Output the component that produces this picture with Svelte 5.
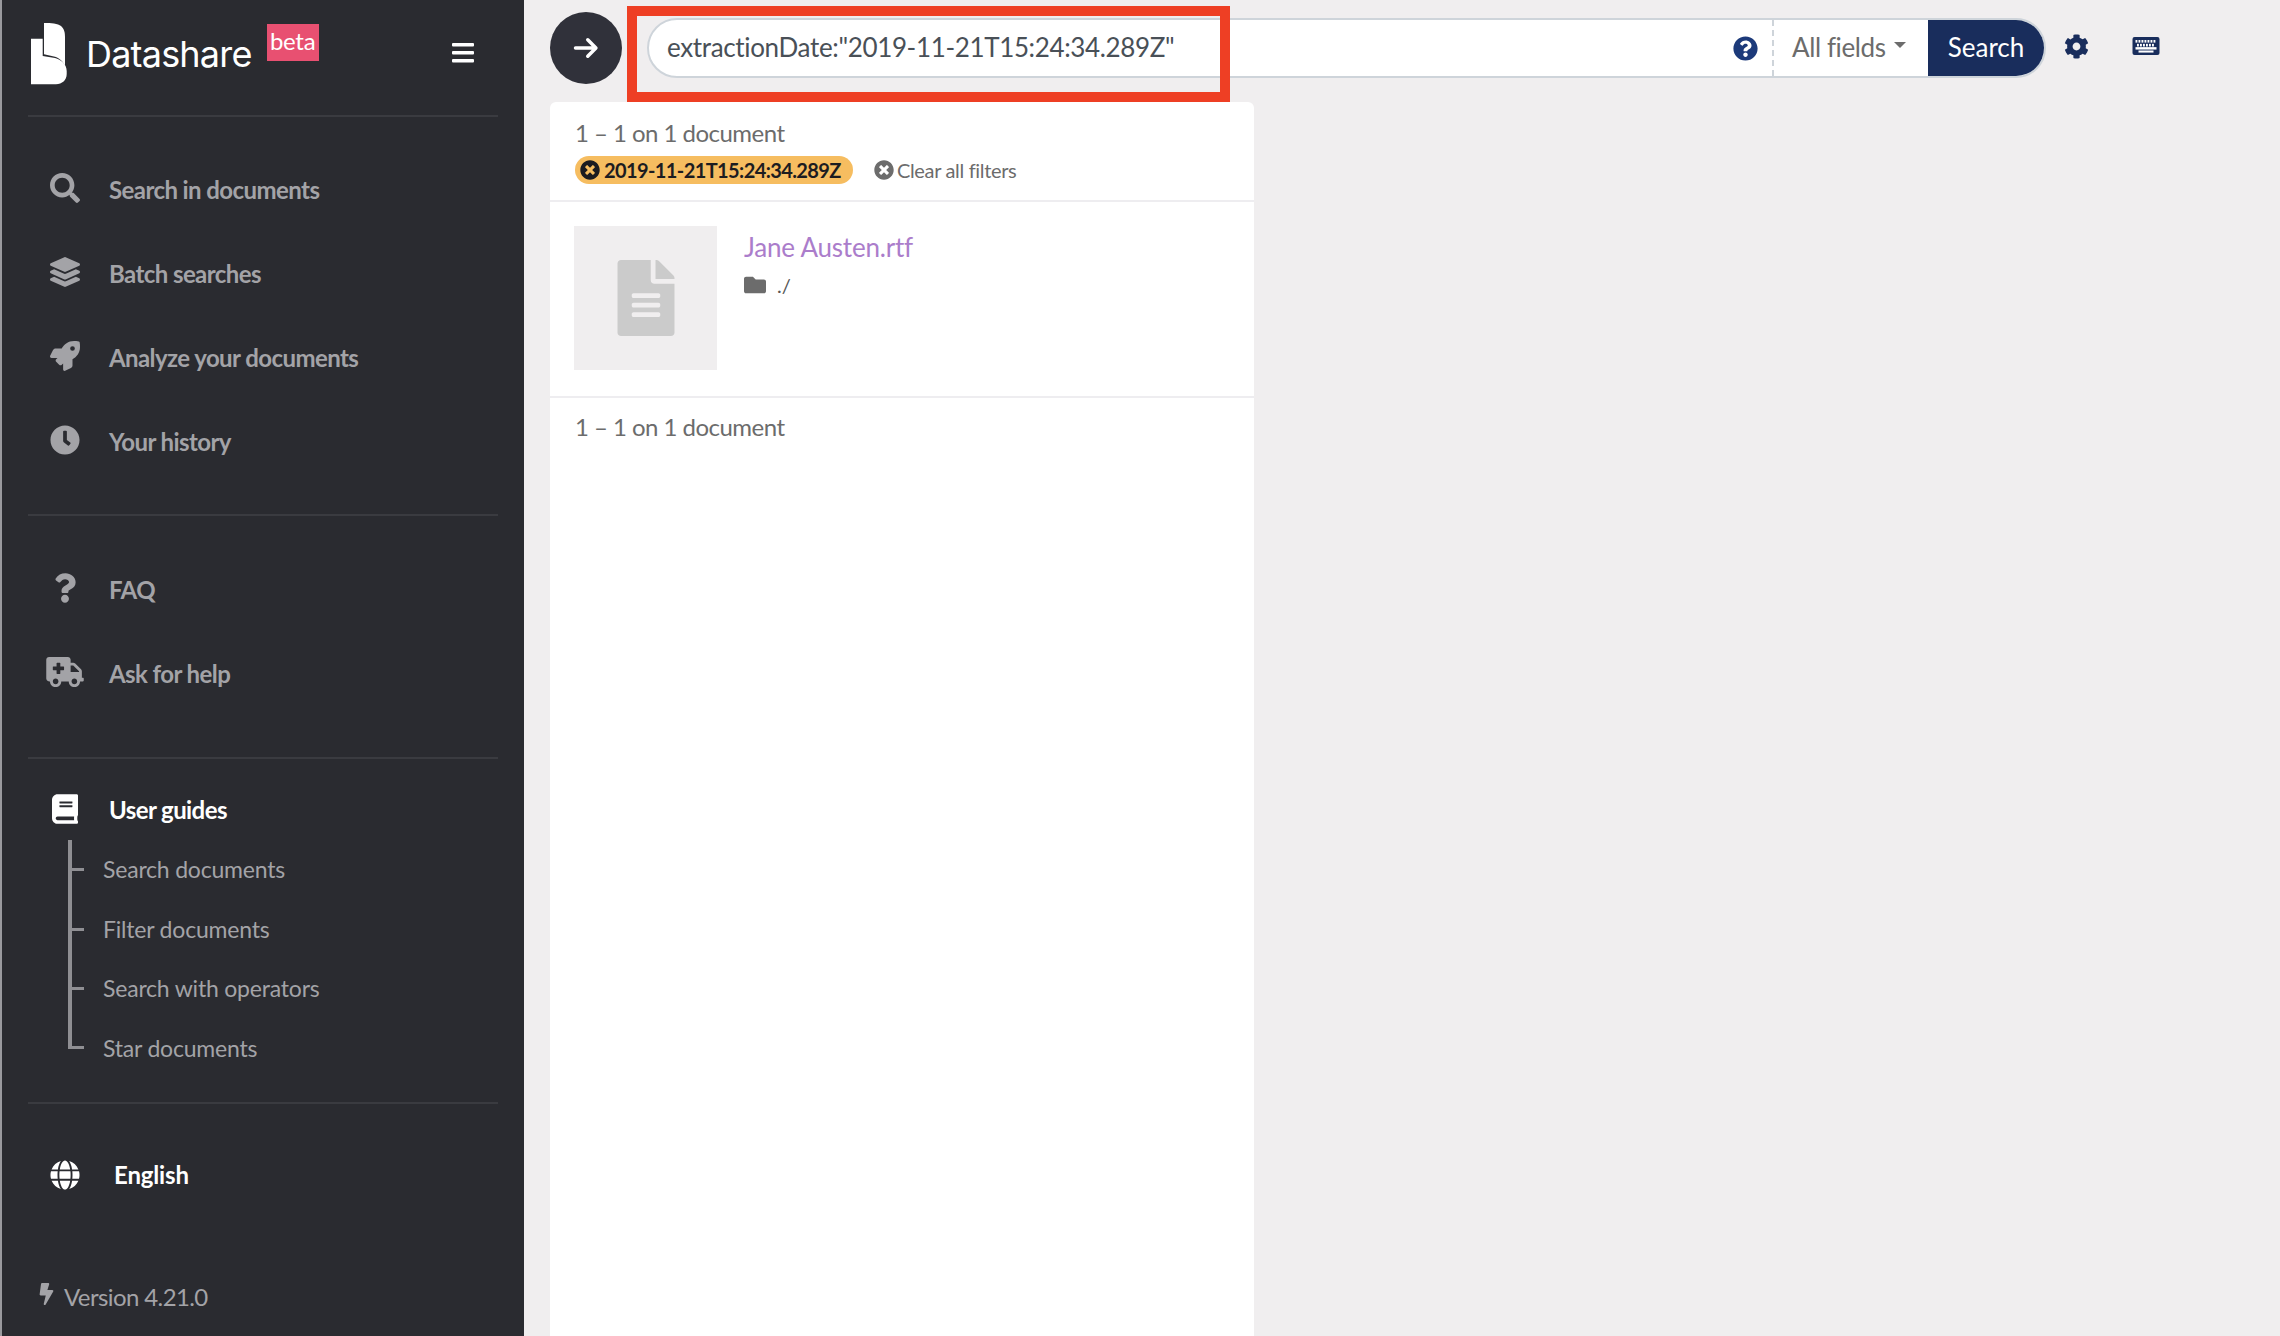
<script>
  const mainNav = [
    { label: 'Search in documents', box: '0 0 512 512', w: 30, path: 'M505 442.7L405.3 343c-4.5-4.5-10.6-7-17-7H372c27.6-35.3 44-79.7 44-128C416 93.1 322.9 0 208 0S0 93.1 0 208s93.1 208 208 208c48.3 0 92.7-16.4 128-44v16.3c0 6.4 2.5 12.5 7 17l99.7 99.7c9.4 9.4 24.6 9.4 33.9 0l28.3-28.3c9.4-9.4 9.4-24.6.1-34zM208 336c-70.7 0-128-57.2-128-128 0-70.7 57.2-128 128-128 70.7 0 128 57.2 128 128 0 70.7-57.2 128-128 128z' },
    { label: 'Batch searches', box: '0 0 512 512', w: 30, path: 'M12.41 148.02l232.94 105.67c6.8 3.09 14.49 3.09 21.29 0l232.94-105.67c16.55-7.51 16.55-32.52 0-40.03L266.65 2.31a25.607 25.607 0 0 0-21.29 0L12.41 107.98c-16.55 7.51-16.55 32.53 0 40.04zm487.18 88.28l-58.09-26.33-161.64 73.27c-7.56 3.43-15.59 5.17-23.86 5.17s-16.29-1.74-23.86-5.17L70.51 209.97l-58.1 26.33c-16.55 7.5-16.55 32.5 0 40l232.94 105.59c6.8 3.08 14.49 3.08 21.29 0L499.59 276.3c16.55-7.5 16.55-32.5 0-40zm0 127.8l-57.87-26.23-161.86 73.37c-7.56 3.43-15.59 5.17-23.86 5.17s-16.29-1.74-23.86-5.17L70.29 337.87 12.41 364.1c-16.55 7.5-16.55 32.5 0 40l232.94 105.59c6.8 3.08 14.49 3.08 21.29 0L499.59 404.1c16.55-7.5 16.55-32.5 0-40z' },
    { label: 'Analyze your documents', box: '0 0 512 512', w: 30, path: 'M505.12019,19.09375c-1.18945-5.53125-6.65819-11-12.207-12.1875C460.716,0,435.507,0,410.40747,0,307.17523,0,245.26909,55.20312,199.05238,128H94.83772c-16.34763.01562-35.55658,11.875-42.88664,26.48438L2.51562,253.29688A28.4,28.4,0,0,0,0,264a24.00867,24.00867,0,0,0,24.00582,24H127.81618l-22.47457,22.46875c-11.36521,11.36133-12.99607,32.25781,0,45.25L156.24582,406.625c11.15623,11.1875,32.15619,13.15625,45.27726,0l22.47457-22.46875V488a24.00867,24.00867,0,0,0,24.00581,24,28.55934,28.55934,0,0,0,10.707-2.51562l98.72834-49.39063c14.62888-7.29687,26.50776-26.5,26.50776-42.85937V312.79688c72.59753-46.3125,128.03493-108.40626,128.03493-211.09376C512.07526,76.5,512.07526,51.29688,505.12019,19.09375ZM384.04033,168A40,40,0,1,1,424.05,128,40.02322,40.02322,0,0,1,384.04033,168Z' },
    { label: 'Your history', box: '0 0 512 512', w: 30, path: 'M256,8C119,8,8,119,8,256S119,504,256,504,504,393,504,256,393,8,256,8Zm92.49,313h0l-20,25a16,16,0,0,1-22.49,2.5h0l-67-49.72a40,40,0,0,1-15-31.23V112a16,16,0,0,1,16-16h32a16,16,0,0,1,16,16V256l58,42.5A16,16,0,0,1,348.49,321Z' }
  ]
  const helpNav = [
    { label: 'FAQ', box: '0 0 384 512', w: 22, path: 'M202.021 0C122.202 0 70.503 32.703 29.914 91.026c-7.363 10.58-5.093 25.086 5.178 32.874l43.138 32.709c10.373 7.865 25.132 6.026 33.253-4.148 25.049-31.381 43.63-49.449 82.757-49.449 30.764 0 68.816 19.799 68.816 49.631 0 22.552-18.617 34.134-48.993 51.164-35.423 19.86-82.299 44.576-82.299 106.405V320c0 13.255 10.745 24 24 24h72.471c13.255 0 24-10.745 24-24v-5.773c0-42.86 125.268-44.645 125.268-160.627C377.504 66.256 286.902 0 202.021 0zM192 373.459c-38.196 0-69.271 31.075-69.271 69.271 0 38.195 31.075 69.27 69.271 69.27s69.271-31.075 69.271-69.271-31.075-69.27-69.271-69.27z' },
    { label: 'Ask for help', box: '0 0 640 512', w: 38, path: 'M624 352h-16V243.9c0-12.7-5.1-24.9-14.1-33.9L494 110.1c-9-9-21.2-14.1-33.9-14.1H416V48c0-26.5-21.5-48-48-48H48C21.5 0 0 21.5 0 48v320c0 26.5 21.5 48 48 48h16c0 53 43 96 96 96s96-43 96-96h128c0 53 43 96 96 96s96-43 96-96h48c8.8 0 16-7.2 16-16v-32c0-8.8-7.2-16-16-16zM160 464c-26.5 0-48-21.5-48-48s21.5-48 48-48 48 21.5 48 48-21.5 48-48 48zm144-248c0 4.4-3.6 8-8 8h-56v56c0 4.4-3.6 8-8 8h-48c-4.4 0-8-3.6-8-8v-56h-56c-4.4 0-8-3.6-8-8v-48c0-4.4 3.6-8 8-8h56v-56c0-4.4 3.6-8 8-8h48c4.4 0 8 3.6 8 8v56h56c4.4 0 8 3.6 8 8v48zm176 248c-26.5 0-48-21.5-48-48s21.5-48 48-48 48 21.5 48 48-21.5 48-48 48zm80-208H416V144h44.1l99.9 99.9V256z' }
  ]
  const guides = ['Search documents', 'Filter documents', 'Search with operators', 'Star documents']
  const timesCircle = 'M256 8C119 8 8 119 8 256s111 248 248 248 248-111 248-248S393 8 256 8zm121.6 313.1c4.7 4.7 4.7 12.3 0 17L338 377.6c-4.7 4.7-12.3 4.7-17 0L256 312l-65.1 65.6c-4.7 4.7-12.3 4.7-17 0L134.4 338c-4.7-4.7-4.7-12.3 0-17l65.6-65-65.6-65.1c-4.7-4.7-4.7-12.3 0-17l39.6-39.6c4.7-4.7 12.3-4.7 17 0l65 65.7 65.1-65.6c4.7-4.7 12.3-4.7 17 0l39.6 39.6c4.7 4.7 4.7 12.3 0 17L312 256l65.6 65.1z'
  const keyRows = [
    { y: 64, xs: [64, 128, 192, 256, 320, 384, 448] },
    { y: 146, xs: [96, 160, 224, 288, 352, 416] }
  ]
</script>

<div class="app">
  <aside class="sidebar">
    <header class="brand">
      <svg class="logo" viewBox="0 0 36 62" aria-hidden="true">
        <path fill="#fff" d="M13 0C20 0 27 .5 30 3C33.5 6 34 10 34 14V43C32 38 28 35 24 33.7L13 31.3Z" />
        <path fill="#fff" d="M0 15.7H11.7V33L24 35C30 36.5 35.7 41 35.7 48V51C35.7 57 31 61.3 25 61.3H0Z" />
      </svg>
      <span class="wordmark">Datashare</span>
      <span class="beta">beta</span>
      <svg class="bars" viewBox="0 0 22 20" aria-hidden="true">
        <rect width="22" height="3.5" y="0" rx="1" />
        <rect width="22" height="3.5" y="8" rx="1" />
        <rect width="22" height="3.5" y="16" rx="1" />
      </svg>
    </header>

    <nav class="group first">
      {#each mainNav as item}
        <a class="item">
          <span class="ico"><svg viewBox={item.box} style="width:{item.w}px"><path d={item.path} /></svg></span>
          <span class="label">{item.label}</span>
        </a>
      {/each}
    </nav>

    <nav class="group second">
      {#each helpNav as item}
        <a class="item">
          <span class="ico"><svg viewBox={item.box} style="width:{item.w}px"><path d={item.path} /></svg></span>
          <span class="label">{item.label}</span>
        </a>
      {/each}
    </nav>

    <section class="group guides">
      <div class="item active">
        <span class="ico">
          <svg viewBox="0 0 448 512" style="width:26px"><path d="M448 360V24c0-13.3-10.7-24-24-24H96C43 0 0 43 0 96v320c0 53 43 96 96 96h328c13.3 0 24-10.7 24-24v-16c0-7.5-3.5-14.3-8.9-18.7-4.2-15.4-4.2-59.3 0-74.7 5.4-4.3 8.9-11.1 8.9-18.6zM128 134c0-3.3 2.7-6 6-6h212c3.3 0 6 2.7 6 6v20c0 3.3-2.7 6-6 6H134c-3.3 0-6-2.7-6-6v-20zm0 64c0-3.3 2.7-6 6-6h212c3.3 0 6 2.7 6 6v20c0 3.3-2.7 6-6 6H134c-3.3 0-6-2.7-6-6v-20zm253.4 250H96c-17.7 0-32-14.3-32-32 0-17.6 14.4-32 32-32h285.4c-1.9 17.1-1.9 46.9 0 64z" /></svg>
        </span>
        <span class="label">User guides</span>
      </div>
      <ul class="tree">
        {#each guides as guide}
          <li>{guide}</li>
        {/each}
      </ul>
    </section>

    <div class="lang">
      <span class="ico">
        <svg viewBox="0 0 496 512" style="width:30px"><path d="M336.5 160C322 70.7 287.8 8 248 8s-74 62.7-88.5 152h177zM152 256c0 22.2 1.2 43.5 3.3 64h185.3c2.1-20.5 3.3-41.8 3.3-64s-1.2-43.5-3.3-64H155.3c-2.1 20.5-3.3 41.8-3.3 64zm324.7-96c-28.6-67.9-86.5-120.4-158-141.6 24.4 33.8 41.2 84.7 50 141.6h108zM177.2 18.4C105.8 39.6 47.8 92.1 19.3 160h108c8.7-56.9 25.5-107.8 49.9-141.6zM487.4 192H372.7c2.1 21 3.3 42.5 3.3 64s-1.2 43-3.3 64h114.6c5.5-20.5 8.6-41.8 8.6-64s-3.1-43.5-8.5-64zM120 256c0-21.5 1.2-43 3.3-64H8.6C3.2 212.5 0 233.8 0 256s3.2 43.5 8.6 64h114.6c-2-21-3.2-42.5-3.2-64zm39.5 96c14.5 89.3 48.7 152 88.5 152s74-62.7 88.5-152h-177zm159.3 141.6c71.4-21.2 129.4-73.7 158-141.6h-108c-8.8 56.9-25.6 107.8-50 141.6zM19.3 352c28.6 67.9 86.5 120.4 158 141.6-24.4-33.8-41.2-84.7-50-141.6h-108z" /></svg>
      </span>
      <span>English</span>
    </div>

    <footer class="version">
      <svg viewBox="0 0 320 512" class="bolt"><path d="M296 160H180.6l42.6-129.8C227.2 15 215.7 0 200 0H56C44 0 33.8 8.9 32.2 20.8l-32 240C-1.7 275.2 9.5 288 24 288h118.7L96.6 482.5c-3.6 15.2 8 29.5 23.3 29.5 8.4 0 16.4-4.4 20.8-12l176-304c9.3-15.9-2.2-36-20.7-36z" /></svg>
      <span>Version 4.21.0</span>
    </footer>
  </aside>

  <main class="main">
    <div class="topbar">
      <button class="back" aria-label="Back">
        <svg viewBox="0 0 24 24" width="28" height="28"><path d="M3 12h17M13.5 5l7 7-7 7" /></svg>
      </button>
      <div class="searchbox">
        <span class="query">extractionDate:"2019-11-21T15:24:34.289Z"</span>
        <svg class="help" viewBox="0 0 512 512"><path d="M504 256c0 136.997-111.043 248-248 248S8 392.997 8 256C8 119.083 119.043 8 256 8s248 111.083 248 248zM262.655 90c-54.497 0-89.255 22.957-116.549 63.758-3.536 5.286-2.353 12.415 2.715 16.258l34.699 26.31c5.205 3.947 12.621 3.008 16.665-2.122 17.864-22.658 30.113-35.797 57.303-35.797 20.429 0 45.698 13.148 45.698 32.958 0 14.976-12.363 22.667-32.534 33.976C247.128 238.528 216 254.941 216 296v4c0 6.627 5.373 12 12 12h56c6.627 0 12-5.373 12-12v-1.333c0-28.462 83.186-29.647 83.186-106.667 0-58.002-60.165-102-116.531-102zM256 338c-25.365 0-46 20.635-46 46 0 25.364 20.635 46 46 46s46-20.636 46-46c0-25.365-20.635-46-46-46z" /></svg>
        <span class="fields">All fields<i class="caret"></i></span>
        <span class="submit">Search</span>
      </div>
      <svg class="gear" viewBox="0 0 512 512"><path d="M487.4 315.7l-42.6-24.6c4.3-23.2 4.3-47 0-70.2l42.6-24.6c4.9-2.8 7.1-8.6 5.5-14-11.1-35.6-30-67.8-54.7-94.6-3.8-4.1-10-5.1-14.8-2.3L380.8 110c-17.9-15.4-38.5-27.3-60.8-35.1V25.8c0-5.6-3.9-10.5-9.4-11.7-36.7-8.2-74.3-7.8-109.2 0-5.5 1.2-9.4 6.1-9.4 11.7V75c-22.2 7.9-42.8 19.8-60.8 35.1L88.7 85.5c-4.9-2.8-11-1.9-14.8 2.3-24.7 26.7-43.6 58.9-54.7 94.6-1.7 5.4.6 11.2 5.5 14L67.3 221c-4.3 23.2-4.3 47 0 70.2l-42.6 24.6c-4.9 2.8-7.1 8.6-5.5 14 11.1 35.6 30 67.8 54.7 94.6 3.8 4.1 10 5.1 14.8 2.3l42.6-24.6c17.9 15.4 38.5 27.3 60.8 35.1v49.2c0 5.6 3.9 10.5 9.4 11.7 36.7 8.2 74.3 7.8 109.2 0 5.5-1.2 9.4-6.1 9.4-11.7v-49.2c22.2-7.9 42.8-19.8 60.8-35.1l42.6 24.6c4.9 2.8 11 1.9 14.8-2.3 24.7-26.7 43.6-58.9 54.7-94.6 1.5-5.5-.7-11.3-5.6-14.1zM256 336c-44.1 0-80-35.9-80-80s35.9-80 80-80 80 35.9 80 80-35.9 80-80 80z" /></svg>
      <svg class="keys" viewBox="0 0 576 384">
        <rect width="576" height="384" rx="44" fill="#192d5c" />
        {#each keyRows as row}
          {#each row.xs as x}
            <rect {x} y={row.y} width="40" height="56" fill="#fff" />
          {/each}
        {/each}
        <rect x="64" y="216" width="448" height="52" fill="#fff" />
        <rect x="128" y="288" width="320" height="44" fill="#fff" />
      </svg>
    </div>

    <section class="panel">
      <div class="summary">
        <p class="count">1 – 1 on 1 document</p>
        <div class="filters">
          <span class="pill">
            <svg viewBox="0 0 512 512"><path d={timesCircle} /></svg>
            2019-11-21T15:24:34.289Z
          </span>
          <span class="clear">
            <svg viewBox="0 0 512 512"><path d={timesCircle} /></svg>
            Clear all filters
          </span>
        </div>
      </div>
      <article class="doc">
        <div class="thumb">
          <svg viewBox="0 0 384 512"><path d="M224 136V0H24C10.7 0 0 10.7 0 24v464c0 13.3 10.7 24 24 24h336c13.3 0 24-10.7 24-24V160H248c-13.2 0-24-10.8-24-24zm64 236c0 6.6-5.4 12-12 12H108c-6.6 0-12-5.4-12-12v-8c0-6.6 5.4-12 12-12h168c6.6 0 12 5.4 12 12v8zm0-64c0 6.6-5.4 12-12 12H108c-6.6 0-12-5.4-12-12v-8c0-6.6 5.4-12 12-12h168c6.6 0 12 5.4 12 12v8zm0-72v8c0 6.6-5.4 12-12 12H108c-6.6 0-12-5.4-12-12v-8c0-6.6 5.4-12 12-12h168c6.6 0 12 5.4 12 12zm96-114.1v6.1H256V0h6.1c6.4 0 12.5 2.5 17 7l97.9 98c4.5 4.5 7 10.6 7 16.9z" /></svg>
        </div>
        <div class="meta">
          <a class="title">Jane Austen.rtf</a>
          <div class="path">
            <svg viewBox="0 0 512 512"><path d="M464 128H272l-64-64H48C21.49 64 0 85.49 0 112v288c0 26.51 21.49 48 48 48h416c26.51 0 48-21.49 48-48V176c0-26.51-21.49-48-48-48z" /></svg>
            <span>./</span>
          </div>
        </div>
      </article>
      <p class="count foot">1 – 1 on 1 document</p>
    </section>

    <div class="annotation"></div>
  </main>
</div>

<style>
  :global(body) {
    margin: 0;
    background: #f0eeef;
    font-family: Lato, "Open Sans", sans-serif;
    overflow: hidden;
  }

  .app {
    display: flex;
    height: 1336px;
    overflow: hidden;
  }

  .sidebar {
    width: 522px;
    flex: none;
    display: flex;
    flex-direction: column;
    border-left: 2px solid #9a9a9e;
    background: #2a2b30;
    color: #a3a3a7;
    font-size: 24px;
    font-weight: 700;
  }

  .brand {
    height: 115px;
    margin: 0 26px;
    display: flex;
    align-items: flex-start;
    border-bottom: 2px solid #3a3b40;
  }

  .logo {
    width: 36px;
    height: 62px;
    margin: 23px 0 0 3px;
    flex: none;
  }

  .wordmark {
    margin: 32px 0 0 19px;
    font-family: Inter, sans-serif;
    font-weight: 400;
    font-size: 36px;
    line-height: 44px;
    letter-spacing: -0.8px;
    color: #fff;
  }

  .beta {
    margin: 24px 0 0 15px;
    width: 52px;
    height: 37px;
    background: #e85071;
    color: #fff;
    font-weight: 400;
    font-size: 24px;
    line-height: 33px;
    text-align: center;
    letter-spacing: -0.3px;
  }

  .bars {
    margin: 43px 24px 0 auto;
    width: 22px;
    height: 20px;
    fill: #fff;
  }

  .group {
    margin: 0 26px;
    border-bottom: 2px solid #3a3b40;
  }

  .first {
    padding: 31px 0 30px;
  }

  .second {
    padding: 32px 0 41px;
  }

  .guides {
    padding: 31px 0 24px;
  }

  .item {
    height: 84px;
    display: flex;
    align-items: center;
    gap: 9px;
  }

  .label {
    margin-bottom: 2px;
    letter-spacing: -0.58px;
  }

  .ico {
    width: 70px;
    margin-left: 2px;
    flex: none;
    display: flex;
    justify-content: center;
    margin-top: -5px;
  }

  .ico svg {
    height: 30px;
    fill: currentColor;
    display: block;
  }

  .active {
    height: 40px;
    color: #fff;
    margin-bottom: 10px;
  }

  .active .ico {
    margin-top: -2px;
  }

  .tree {
    list-style: none;
    margin: 0 0 0 40px;
    padding: 0;
    font-weight: 400;
    font-size: 23px;
    letter-spacing: -0.2px;
  }

  .tree li {
    position: relative;
    height: 59.5px;
    padding-left: 31px;
    line-height: 59px;
    border-left: 4px solid #8f8f93;
    box-sizing: border-box;
  }

  .tree li::before {
    content: '';
    position: absolute;
    left: 0;
    top: 28px;
    width: 12px;
    height: 3px;
    background: #8f8f93;
  }

  .tree li:last-child {
    height: 30px;
    margin-bottom: 29px;
  }

  .tree li:last-child::before {
    top: 27px;
  }

  .lang {
    margin: 51px 26px 0;
    display: flex;
    align-items: center;
    height: 40px;
    color: #fff;
    letter-spacing: -0.15px;
  }

  .lang .ico {
    margin-right: 14px;
    margin-top: 0;
  }

  .lang > span:last-child {
    margin-bottom: 0;
  }

  .version {
    margin: 85px 0 0 37px;
    display: flex;
    align-items: center;
    gap: 10px;
    font-size: 24px;
    font-weight: 400;
    letter-spacing: -0.6px;
    color: #a3a3a7;
    height: 34px;
  }

  .bolt {
    width: 15px;
    height: 22px;
    fill: currentColor;
    margin-top: -6px;
  }

  .main {
    position: relative;
    flex: 1;
    padding-left: 26px;
  }

  .topbar {
    height: 102px;
    display: flex;
    align-items: flex-start;
    padding-top: 12px;
    box-sizing: border-box;
  }

  .back {
    width: 72px;
    height: 72px;
    flex: none;
    padding: 0;
    border: 0;
    border-radius: 50%;
    background: #30313a;
    display: flex;
    align-items: center;
    justify-content: center;
  }

  .back path {
    fill: none;
    stroke: #fff;
    stroke-width: 3;
    stroke-linecap: round;
    stroke-linejoin: round;
  }

  .searchbox {
    width: 1399px;
    height: 60px;
    margin: 6px 0 0 25px;
    flex: none;
    display: flex;
    align-items: center;
    box-sizing: border-box;
    background: #fff;
    border: 2px solid #ced4da;
    border-radius: 30px;
    overflow: hidden;
    color: #6c6c6c;
    font-size: 26px;
  }

  .query {
    flex: 1;
    padding-left: 18px;
    padding-bottom: 2px;
    color: #495057;
    white-space: nowrap;
    letter-spacing: -0.35px;
  }

  .help {
    width: 25px;
    height: 25px;
    fill: #1c3a7a;
    margin-right: 14px;
  }

  .fields {
    width: 156px;
    height: 100%;
    box-sizing: border-box;
    padding: 0 0 2px 18px;
    display: flex;
    align-items: center;
    gap: 8px;
    border-left: 2px dashed #ced4da;
    letter-spacing: -0.4px;
  }

  .caret {
    width: 0;
    height: 0;
    border: 6px solid transparent;
    border-top-color: #6c6c6c;
    border-bottom: 0;
    margin-top: -4px;
  }

  .submit {
    width: 118px;
    height: 60px;
    margin: 0 -2px 0 0;
    padding: 0 2px 2px 0;
    box-sizing: border-box;
    flex: none;
    display: flex;
    align-items: center;
    justify-content: center;
    background: #192d5c;
    color: #fff;
  }

  .gear {
    width: 25px;
    height: 25px;
    margin: 22px 0 0 18px;
    fill: #192d5c;
    flex: none;
  }

  .keys {
    width: 28px;
    height: 18px;
    margin: 25px 0 0 43px;
    flex: none;
  }

  .panel {
    width: 704px;
    height: 1234px;
    background: #fff;
    border-radius: 6px 6px 0 0;
    color: #6c6c6c;
  }

  .count {
    margin: 0;
    font-size: 24px;
    line-height: 30px;
    letter-spacing: -0.53px;
  }

  .summary {
    height: 100px;
    padding: 16px 25px 0;
    box-sizing: border-box;
    border-bottom: 2px solid #eeedf0;
  }

  .filters {
    margin-top: 8px;
    display: flex;
    align-items: center;
    gap: 21px;
  }

  .pill {
    height: 28px;
    padding: 0 12px 0 5px;
    display: flex;
    align-items: center;
    gap: 4px;
    border-radius: 14px;
    background: #f6bd60;
    color: #1c1c20;
    font-size: 20px;
    font-weight: 700;
    letter-spacing: -0.6px;
  }

  .pill svg,
  .clear svg {
    width: 20px;
    height: 20px;
    fill: currentColor;
  }

  .clear {
    display: flex;
    align-items: center;
    gap: 3px;
    font-size: 20px;
    letter-spacing: -0.33px;
  }

  .doc {
    height: 196px;
    padding: 24px 24px 0;
    box-sizing: border-box;
    display: flex;
    gap: 27px;
    border-bottom: 2px solid #eeedf0;
  }

  .thumb {
    width: 143px;
    height: 144px;
    background: #f0eeef;
    display: flex;
    align-items: center;
    justify-content: center;
  }

  .thumb svg {
    width: 58px;
    height: 76px;
    fill: #cbcbcb;
  }

  .title {
    display: block;
    color: #ab7dcb;
    font-size: 26px;
    line-height: 32px;
    margin-top: 5px;
    letter-spacing: -0.2px;
  }

  .path {
    margin-top: 10px;
    display: flex;
    align-items: center;
    gap: 11px;
    font-size: 20px;
    color: #555;
  }

  .path svg {
    width: 22px;
    height: 22px;
    fill: #6c6c6c;
  }

  .foot {
    padding: 14px 25px 0;
  }

  .annotation {
    position: absolute;
    left: 103px;
    top: 6px;
    width: 603px;
    height: 96px;
    box-sizing: border-box;
    border: 10px solid #ee3f24;
    pointer-events: none;
  }
</style>
